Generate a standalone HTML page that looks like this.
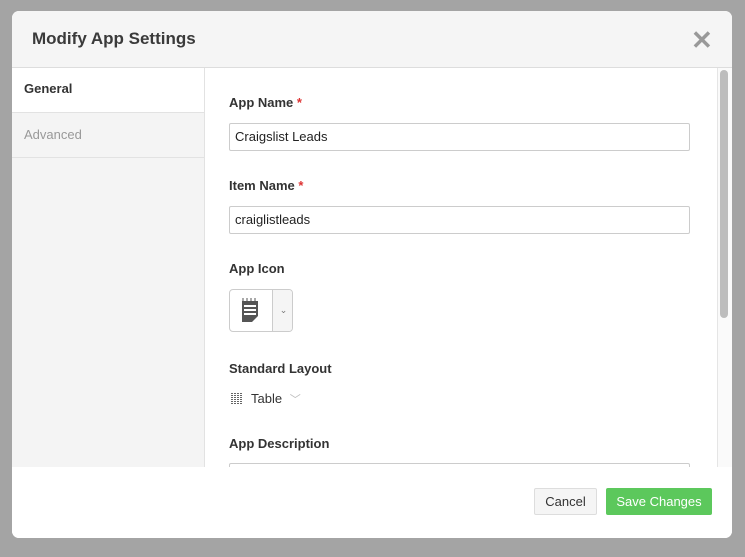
<!DOCTYPE html><html><head><style>
body{margin:0;width:745px;height:557px;background:#a4a4a4;font-family:"Liberation Sans",sans-serif;position:relative;overflow:hidden}
.m{position:absolute;left:12px;top:11px;width:720px;height:527px;background:#fff;border-radius:7px;overflow:hidden}
.hd{position:absolute;left:0;top:0;width:720px;height:56px;background:#f5f5f5;border-bottom:1px solid #ddd}
.hd h1{margin:0;position:absolute;left:20px;top:18px;font-size:17px;font-weight:bold;color:#3a3a3a}
.x{position:absolute;left:679px;top:14px;font-size:26px;color:#999;font-weight:bold}
.sb{position:absolute;left:0;top:57px;width:192px;height:399px;background:#f4f4f4;border-right:1px solid #e2e2e2}
.tab{height:44px;border-bottom:1px solid #e2e2e2;font-size:13px;padding-left:12px;line-height:44px;color:#999}
.tab.a{background:#fff;color:#333;font-weight:bold;line-height:42px}
.lbl{position:absolute;left:217px;font-size:13px;font-weight:bold;color:#333}
.lbl span{color:#d33}
.in{position:absolute;left:217px;width:461px;height:26px;border:1px solid #ccc;border-radius:2px;font-size:13px;line-height:26px;padding-left:5px;box-sizing:border-box;color:#222}
.track{position:absolute;left:705px;top:57px;width:14px;height:399px;border-left:1px solid #e5e5e5;background:#fafafa}
.thumb{position:absolute;left:708px;top:59px;width:8px;height:248px;background:#bdbdbd;border-radius:4px}
.btn{position:absolute;top:477px;height:25px;font-size:13px;line-height:25px;text-align:center;border-radius:2px}
</style></head><body><div class="m">
<div class="hd"><h1>Modify App Settings</h1><div class="x">✕</div></div>
<div class="sb"><div class="tab a">General</div><div class="tab">Advanced</div></div>
<div class="lbl" style="top:84px">App Name <span>*</span></div>
<div class="in" style="top:112px;height:28px">Craigslist Leads</div>
<div class="lbl" style="top:167px">Item Name <span>*</span></div>
<div class="in" style="top:195px;height:28px">craiglistleads</div>
<div class="lbl" style="top:250px">App Icon</div>
<div style="position:absolute;left:217px;top:278px;width:64px;height:43px;border:1px solid #ccc;border-radius:4px;background:#fff;box-sizing:border-box;overflow:hidden">
<div style="position:absolute;left:42px;top:0;width:22px;height:43px;border-left:1px solid #ccc;background:#f5f5f5;font-size:9px;color:#777;text-align:center;line-height:40px;box-sizing:border-box">⌄</div>
<svg style="position:absolute;left:10px;top:7px" width="20" height="28" viewBox="0 0 20 28"><path d="M2 4h16v15l-6 6H2z" fill="#555"/><rect x="4" y="8" width="12" height="2" fill="#fff"/><rect x="4" y="12" width="12" height="2" fill="#fff"/><rect x="4" y="16" width="12" height="2" fill="#fff"/><path d="M3 4V1M7 4V1M11 4V1M15 4V1" stroke="#555"/></svg></div>
<div class="lbl" style="top:350px">Standard Layout</div>
<div style="position:absolute;left:219px;top:382px;width:11px;height:11px;background:repeating-linear-gradient(90deg,#666 0 2px,transparent 2px 3px),#fff;-webkit-mask:repeating-linear-gradient(#000 0 1px,transparent 1px 2px)"></div>
<div style="position:absolute;left:239px;top:380px;font-size:13px;color:#333">Table <span style="color:#bbb;font-size:11px;margin-left:4px">﹀</span></div>
<div class="lbl" style="top:425px">App Description</div>
<div class="in" style="top:452px;height:20px"></div>
<div class="track"></div><div class="thumb"></div>
<div style="position:absolute;left:0;top:456px;width:720px;height:71px;background:#fff"></div>
<div class="btn" style="left:522px;width:61px;border:1px solid #ddd;background:#f5f5f5;color:#333">Cancel</div>
<div class="btn" style="left:594px;width:106px;background:#5cc85c;color:#fff;height:27px;line-height:27px">Save Changes</div>
</div></body></html>
